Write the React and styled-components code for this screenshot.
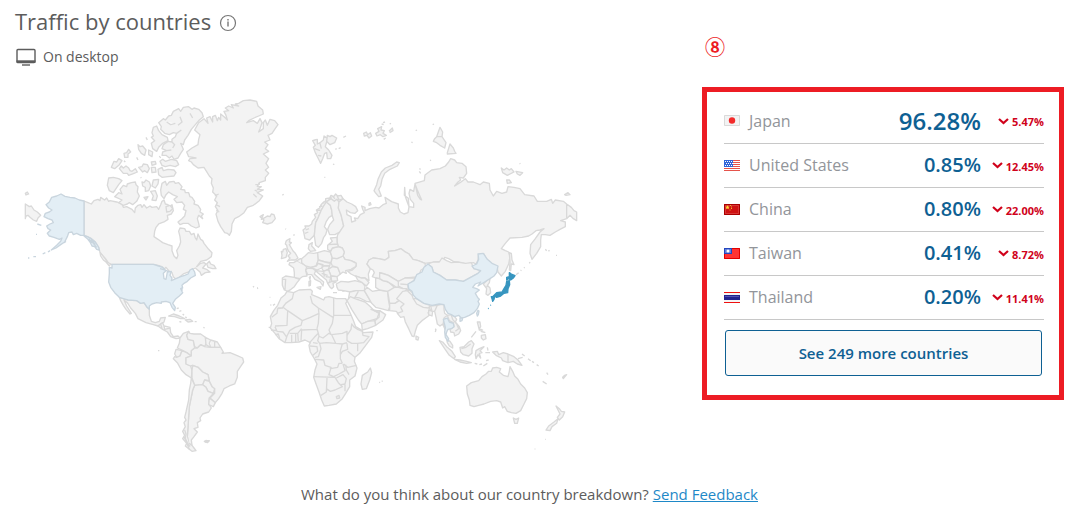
import React from "react";
import styled, { createGlobalStyle } from "styled-components";

const GlobalStyle = createGlobalStyle`
  * {
    box-sizing: border-box;
  }
  body {
    margin: 0;
    background: #fff;
    color: #5c5c5c;
    font-family: "Open Sans", "Noto Sans", sans-serif;
  }
`;

const Page = styled.main`
  padding: 7px 7px 8px 15px;
`;

const Columns = styled.div`
  display: flex;
  align-items: flex-start;
`;

const Left = styled.section`
  flex: 1;
  min-width: 0;
`;

const Title = styled.h1`
  display: flex;
  align-items: center;
  gap: 8px;
  margin: 0;
  font-size: 22px;
  font-weight: 400;
  line-height: 28px;
  svg {
    margin-top: 4px;
  }
`;

const Device = styled.p`
  display: flex;
  align-items: center;
  gap: 6px;
  margin: 11px 0 0;
  font-size: 14px;
  line-height: 22px;
`;

const Map = styled.svg`
  display: block;
  width: 100%;
  max-width: 554px;
  margin: 28px 0 0 9px;
  fill: #f3f3f3;
  stroke: #d9d9d9;
  stroke-linejoin: round;
  stroke-width: 4;
`;

const Borders = styled.path`
  fill: none;
`;

const Visited = styled.path`
  fill: ${(props) => (props.$top ? "#3795bf" : "#e3eef5")};
  stroke: ${(props) => (props.$top ? "#3795bf" : "#c9d5de")};
`;

const Right = styled.aside`
  flex: 0 1 362px;
`;

const Marker = styled.div`
  margin-top: 26px;
  padding-left: 3px;
  color: #ed1c24;
  font-family: "Noto Sans CJK JP", sans-serif;
  font-size: 20px;
  font-weight: 700;
  line-height: 28px;
`;

const Panel = styled.div`
  margin-top: 26px;
  padding: 7px 15px 19px 17px;
  border: 5px solid #ed1c24;
`;

const Table = styled.table`
  width: 100%;
  border-collapse: collapse;
`;

const Row = styled.tr`
  height: 44px;
  border-bottom: 1px solid #c8c8c8;
`;

const Country = styled.th`
  padding: 0;
  color: #92959a;
  font-size: 16px;
  font-weight: 400;
  text-align: left;
  span {
    display: flex;
    align-items: center;
    gap: 9px;
  }
`;

const Share = styled.td`
  padding: 0;
  color: #0e6093;
  font-size: ${(props) => (props.$big ? "24px" : "20px")};
  font-weight: 600;
  line-height: 28px;
  text-align: right;
`;

const Change = styled.td`
  width: 63px;
  padding: 2px 0 0;
  color: #d0021b;
  font-size: 11px;
  font-weight: 700;
  span {
    display: flex;
    align-items: center;
    justify-content: flex-end;
    gap: 3px;
  }
`;

const MoreButton = styled.button`
  display: block;
  width: calc(100% - 3px);
  height: 46px;
  margin: 10px 2px 0 1px;
  border: 1px solid #0e6093;
  border-radius: 3px;
  background: #fafafa;
  color: #0e6093;
  font-family: inherit;
  font-size: 15px;
  font-weight: 600;
  cursor: pointer;
`;

const Feedback = styled.p`
  margin: 29px 0 0;
  padding-right: 20px;
  font-size: 15px;
  line-height: 22px;
  text-align: center;
  a {
    color: #1e88c7;
  }
`;

const InfoIcon = () => (
  <svg width="18" height="18" viewBox="0 0 18 18" fill="none" stroke="#777">
    <circle cx="9" cy="9" r="7.5" strokeWidth="1.2" />
    <path d="M9 7.5v5M9 5v1.5" strokeWidth="1.4" />
  </svg>
);

const DesktopIcon = () => (
  <svg width="22" height="18" viewBox="0 0 22 18" fill="none" stroke="#5c5c5c">
    <rect x="2" y="1.5" width="18" height="13" rx="1" strokeWidth="1.4" />
    <path d="M1.5 13.5h19" strokeWidth="2.4" />
    <path d="M7 17h8" strokeWidth="1.4" />
  </svg>
);

const DownIcon = () => (
  <svg width="11" height="8" viewBox="0 0 11 8" fill="none" stroke="#d0021b">
    <path d="M1 1 5.5 5 10 1" strokeWidth="2.2" />
  </svg>
);

const flags = {
  jp: (
    <>
      <path d="M0 0h16v11H0z" fill="#f3f3f3" />
      <path d="M.5.5h15v10H.5z" fill="none" stroke="#dadada" />
      <circle cx="8" cy="5.5" r="3.2" fill="#f32b2b" />
    </>
  ),
  us: (
    <>
      <path d="M0 0h16v11H0z" fill="#fff" />
      <path d="M0 .5h16M0 2.5h16M0 4.5h16M0 6.5h16M0 8.5h16M0 10.5h16" stroke="#e5534b" />
      <path d="M0 0h9v7H0z" fill="#2f64d8" />
      <path d="M1 1.5h8M2 3.5h7M1 5.5h8" stroke="#fff" strokeDasharray="1 1" />
    </>
  ),
  cn: (
    <>
      <path d="M0 0h16v11H0z" fill="#cf1212" />
      <path d="M.5.5h15v10H.5z" fill="none" stroke="#a80000" />
      <path d="M1.5 1.5h13v8h-13z" fill="none" stroke="#e45858" strokeOpacity=".5" />
      <path d="m3.5 1.2.7 1.3 1.5.2-1.1 1.1.3 1.5-1.4-.8-1.4.8.3-1.5-1.1-1.1 1.5-.2z" fill="#ffd83b" />
      <path d="M6 1h1v1H6zM7 2.5h1v1H7zM7 4h1v1H7zM5.5 5.5h1v1h-1z" fill="#f2b632" />
    </>
  ),
  tw: (
    <>
      <path d="M0 0h16v11H0z" fill="#f33" />
      <path d="M.5.5h15v10H.5z" fill="none" stroke="#e00000" />
      <path d="M0 0h8v6H0z" fill="#2446bd" />
      <path d="M1 1h6v4H1z" fill="#5e7ddd" />
      <circle cx="4" cy="3" r="1.5" fill="#fff" />
    </>
  ),
  th: (
    <>
      <path d="M0 0h16v11H0z" fill="#f5f5f5" />
      <path d="M0 .5h16M0 10.5h16" stroke="#ee1111" />
      <path d="M0 3h16v5H0z" fill="#23238f" />
      <path d="M1 4.5h14" stroke="#5353b5" />
    </>
  ),
};

const Flag = ({ code }) => (
  <svg width="16" height="11" viewBox="0 0 16 11">
    {flags[code]}
  </svg>
);

const countries = [
  { code: "jp", name: "Japan", share: "96.28%", change: "5.47%" },
  { code: "us", name: "United States", share: "0.85%", change: "12.45%" },
  { code: "cn", name: "China", share: "0.80%", change: "22.00%" },
  { code: "tw", name: "Taiwan", share: "0.41%", change: "8.72%" },
  { code: "th", name: "Thailand", share: "0.20%", change: "11.41%" },
];

const north = [
  // far east of Russia, over the date line
  "M46,342 58,350 64,348 72,360 82,366 92,376 84,384 80,394 70,390 60,382 54,376 48,378 46,386Z",
  "M46,310 52,306 56,312 48,315Z",
  // Canada
  "M222,333 234,338 244,342 252,332 264,328 270,332 272,322 284,330 290,324 296,334 300,332 320,336 336,342 340,352 350,350 366,358 374,368 376,354 384,346 392,344 396,352 402,344 410,354 420,348 426,352 440,350 446,358 452,344 456,334 462,330 466,342 474,344 478,352 486,344 490,362 484,372 472,376 474,388 462,396 446,402 438,412 434,424 432,440 444,448 458,458 474,464 486,468 486,482 492,498 500,506 504,496 500,482 508,468 512,456 510,440 506,424 510,414 524,416 528,424 538,424 544,434 552,430 556,444 560,450 564,432 572,448 578,452 582,460 596,478 606,488 604,500 590,510 572,514 560,530 572,520 582,518 588,522 578,534 590,538 600,546 586,548 574,556 570,546 556,534 544,540 536,546 520,552 508,562 498,568 490,560 486,548 478,544 468,532 462,538 456,530 444,526 432,523 304,523 296,520 288,508 278,498 270,486 268,480 266,472 256,456 244,446 232,440 222,436Z",
  "M590,522 598,514 602,522 612,526 618,536 608,536 594,532Z",
  "M270,488 276,494 284,504 292,516 302,522 298,528 288,516 280,510 272,498Z",
  // Baffin
  "M456,280 466,274 470,286 478,276 492,274 496,280 506,278 516,290 512,298 524,300 526,308 536,308 540,320 546,322 554,334 552,342 564,346 572,358 570,366 580,372 574,378 578,386 566,376 562,386 566,400 568,410 558,414 544,408 534,400 520,400 510,404 504,396 516,386 524,378 528,362 520,358 524,346 516,336 500,338 492,328 502,320 488,314 476,306 468,314 462,326 454,316 452,300Z",
  "M468,350 480,346 488,356 480,364 470,366Z",
  "M314,320 326,308 336,312 330,298 340,286 350,290 352,282 364,278 376,276 378,284 384,290 382,306 388,318 380,334 368,344 358,338 352,342 340,346 326,338 336,330Z",
  "M296,264 310,262 326,266 336,272 326,284 318,296 310,308 298,302 292,286Z",
  "M396,276 402,278 408,270 418,276 422,288 416,302 406,304 406,292 398,288Z",
  "M430,270 446,268 444,282 436,294 426,288Z",
  "M422,304 436,302 442,318 438,332 426,330 430,318Z",
  "M402,322 414,320 408,330Z",
  "M304,232 312,214 320,216 326,206 336,212 328,224 314,236Z",
  "M328,236 334,228 340,234 348,228 356,234 360,242 366,244 376,236 382,246 372,250 356,256 352,250 340,250Z",
  "M386,232 396,230 400,222 412,224 418,236 412,248 404,242 398,246Z",
  "M424,232 436,232 438,246 426,248Z M424,216 436,214 438,222 426,226Z",
  "M444,238 456,232 460,242 474,238 492,240 498,248 492,258 474,260 456,262 446,254Z",
  "M450,214 458,208 466,214 484,208 500,212 506,224 496,230 480,226 466,230 456,226Z",
  // Ellesmere and Axel Heiberg
  "M446,98 460,86 466,90 476,78 484,76 490,64 506,56 512,64 520,52 536,50 546,58 552,54 566,58 576,68 580,80 568,90 556,104 544,118 534,136 524,150 520,164 512,160 520,178 512,190 504,204 492,208 486,198 478,204 468,196 456,196 458,186 470,182 456,176 460,164 474,154 486,156 486,148 496,140 500,130 490,128 478,134 464,130 452,118 454,110Z M470,96 482,104 496,100 M510,80 516,96 504,106 M486,156 494,164 488,174 M470,182 484,180 M540,70 548,84 M500,130 514,120",
  "M430,112 440,108 446,122 456,134 472,142 474,152 458,160 446,172 440,184 428,176 424,160 434,152 424,142 430,138 426,128Z",
  "M384,164 390,170 398,168 408,180 404,196 394,190 386,178Z M416,180 428,186 426,200 416,194Z",
  "M342,190 350,188 356,178 362,186 354,192 354,202 344,202Z M408,142 412,150 M342,212 346,216 M380,202 384,210 M392,262 394,264 M448,198 452,204",
];

const arctic = [
  // Greenland
  "M44,120 56,98 72,86 84,100 80,84 90,80 98,96 98,80 106,76 112,92 116,82 122,90 122,72 134,82 142,90 138,76 132,64 146,62 136,54 146,48 160,54 154,44 176,48 166,42 176,40 190,32 210,30 230,34 234,48 248,60 250,72 236,78 222,84 206,92 200,98 220,92 232,100 240,86 246,98 240,116 236,126 250,116 250,98 256,90 262,106 270,88 284,92 294,104 284,118 276,130 264,136 270,150 254,156 264,164 256,176 266,184 250,192 266,206 258,220 266,232 256,240 266,250 256,262 256,272 238,278 232,290 244,290 232,298 250,300 232,308 248,318 238,332 220,346 202,352 192,368 176,380 164,386 156,402 154,424 148,436 142,430 134,428 122,410 114,394 108,372 114,362 106,350 112,338 104,330 110,318 98,306 100,294 94,280 96,266 88,258 72,232 54,234 40,224 34,216 26,212 30,206 48,204 26,200 20,186 36,174 54,164 56,148 60,134Z M104,318 116,312 M108,344 120,350 M108,362 118,366 M226,284 240,282 M220,312 230,322 M224,300 232,304",
  "M240,380 250,374 244,388 256,382 262,378 270,380 274,372 282,374 286,386 276,398 262,402 248,398 252,390Z",
  // Svalbard
  "M398,152 404,150 412,148 412,162 420,158 430,150 432,138 444,146 440,156 436,170 446,180 456,196 452,206 442,206 440,188 434,190 428,206 422,220 414,204 406,188 400,172 406,166Z M404,176 420,182 M414,196 424,198 M420,160 424,176",
  "M442,136 450,140 456,136 470,144 464,158 450,164 440,154Z",
  "M466,178 470,176 M476,176 482,173 M490,142 498,138 M459,222 463,224 M433,262 436,262 M307,316 311,313 M316,416 318,418 M340,436 344,434",
  // British Isles
  "M318,454 322,450 330,446 328,456 334,458 328,464 334,474 340,484 346,490 354,504 346,510 332,510 322,514 330,504 324,498 332,490 326,484 322,476 320,466 316,462Z",
  "M304,484 308,486 310,478 318,476 322,488 318,502 304,506 306,496Z",
];

const eurasia = [
  // Norway, Sweden, Finland
  "M146,156 144,150 152,144 150,138 162,138 170,132 172,124 182,112 178,104 188,98 184,90 194,84 198,74 206,66 212,64 212,56 224,54 228,46 236,50 242,42 248,48 258,46 264,56 254,60 246,58 238,64 228,56 214,66 206,78 198,92 190,112 182,128 180,146 178,166 164,180 150,176Z M186,92 196,90 M192,80 202,78 M204,70 214,60 M220,56 230,52 M232,48 240,56 M246,48 252,58 M150,160 160,156 M152,150 162,146",
  "M178,166 180,146 182,128 190,112 198,92 206,78 214,66 226,76 230,90 232,106 222,112 214,124 208,140 216,150 212,164 206,172 200,190 190,202 182,196 180,182Z",
  "M228,56 238,64 246,58 252,66 250,84 258,104 266,138 254,156 240,164 224,164 218,148 224,134 236,120 232,108 230,90 226,76 214,66Z",
  // Russia
  "M264,56 276,66 290,72 302,80 308,92 300,100 286,98 274,90 276,104 288,110 290,126 302,122 298,114 308,116 316,104 328,98 324,90 320,78 330,82 330,92 344,86 362,82 372,84 384,74 394,70 390,52 410,65 430,72 430,84 436,96 447,102 459,98 462,80 460,55 448,46 449,22 451,50 462,80 476,82 476,70 466,58 462,40 465,28 476,34 480,12 487,30 500,60 496,58 488,46 480,10 508,2 510,-15 530,-30 555,-34 571,-42 581,-54 587,-64 599,-60 605,-52 621,-50 633,-40 635,-20 625,-6 613,-8 617,0 609,6 599,18 615,8 631,-4 639,6 655,6 675,14 685,6 703,10 705,30 715,48 725,34 741,40 755,36 759,20 777,22 795,26 809,44 837,48 847,64 875,64 889,58 893,70 901,60 925,64 935,72 949,82 957,92 965,96 965,122 955,116 945,106 935,116 917,122 931,126 931,140 915,148 901,156 885,166 871,164 859,164 857,180 857,200 845,220 831,238 825,220 827,194 841,176 855,156 867,146 855,150 843,152 831,162 821,168 801,172 765,174 751,190 739,206 751,212 761,216 765,230 761,252 751,274 739,288 729,276 727,265 705,252 693,236 687,222 671,224 669,240 663,252 655,248 635,252 615,248 595,244 581,236 569,232 563,244 545,246 525,248 510,250 490,242 474,238 462,222 448,214 438,206 420,212 400,214 402,232 390,240 370,236 354,234 342,240 336,252 346,266 340,282 342,302 330,294 318,294 300,288 288,282 278,274 292,270 304,258 302,248 288,242 270,238 264,228 268,216 262,204 250,200 246,186 246,174 248,164 254,156 266,138 258,104 250,84 252,66Z M935,72 935,114",
  "M342,70 346,68 348,74 342,76Z",
  // Novaya Zemlya and the arctic islands
  "M357,32 365,14 369,-2 379,-24 391,-36 411,-44 425,-54 433,-52 427,-42 405,-32 389,-20 381,-2 377,18 371,28 379,48 371,50 361,38Z",
  "M326,-140 334,-144 338,-136 346,-142 350,-132 342,-126 336,-134 328,-132Z M362,-140 372,-146 368,-154 380,-160 378,-150 388,-148 384,-140 394,-134 384,-130 376,-136 366,-132Z M380,-168 386,-166 M384,-172 390,-174 M404,-168 408,-170 M402,-146 412,-156 414,-148 404,-142 M386,-122 392,-126",
  "M545,-130 555,-158 563,-144 561,-130 573,-112 569,-96 555,-104 545,-112 535,-116 539,-124Z M545,-130 561,-130 M577,-82 585,-108 595,-96 599,-86 603,-80 577,-78Z",
  "M739,-36 747,-30 755,-36 763,-30 769,-34 777,-24 757,-14 743,-22Z M783,-26 803,-22 795,-14 787,-18Z M755,0 763,0 769,8 757,10Z M929,44 939,38 945,44 933,46Z M482,-148 486,-150 M469,-114 473,-112 M493,-34 497,-32 M493,-26 497,-20 M525,-58 528,-60 M533,-166 537,-168 M794,-50 796,-48",
  // Sakhalin and the Kurils
  "M763,218 769,220 771,240 777,254 769,252 767,272 763,270 765,246Z M783,284 791,278 M797,272 799,270 M807,264 809,262 M823,250 825,246 M871,208 875,212 M881,210 883,214 M903,226 906,226",
  // western and central Europe
  "M82,294 92,288 118,292 134,298 126,308 118,320 108,328 98,334 88,330 82,316Z M82,298 92,298 90,330",
  "M102,254 104,248 116,248 126,242 140,250 156,258 152,270 156,288 142,290 134,296 118,292 118,278 116,264Z",
  "M126,242 136,236 148,242 144,252 M152,270 168,264",
  "M140,236 150,228 160,218 176,220 188,218 190,240 184,258 168,262 152,258 140,248Z",
  "M160,206 162,194 172,188 170,198 176,204 182,212 166,214Z",
  "M188,218 208,212 226,216 232,232 228,248 210,246 190,240Z",
  "M152,270 158,264 174,266 182,272 178,282 194,296 206,306 204,318 196,306 180,298 170,284 158,284Z",
  "M186,322 198,320 196,328Z M162,304 167,302 166,316 162,318Z M163,292 166,290 165,299Z",
  "M168,262 184,258 190,250 204,254 200,264 186,270Z M190,240 210,246 226,250 224,258 206,258 190,250 184,256Z",
  "M200,264 206,258 224,258 220,268 206,274Z",
  "M220,268 232,260 248,262 256,282 246,290 228,288Z",
  "M182,272 206,274 220,268 228,288 224,306 218,310 214,300 200,288 190,280Z M206,274 208,290 M200,280 218,286 M212,290 228,292",
  "M228,288 246,290 248,302 230,304Z",
  "M218,310 230,304 244,306 234,310 236,320 230,326 224,320Z M234,338 246,338 M262,334 270,332",
  "M228,248 232,234 246,236 264,228 270,238 288,242 304,250 302,260 288,268 272,272 274,280 264,276 256,282 248,262 232,258Z",
  "M226,216 232,204 250,200 262,204 268,216 264,228 246,236 232,234Z",
  "M226,174 246,172 246,186 250,200 232,204 226,214 218,208 218,196 232,184Z M220,194 248,192",
  // Turkey, Caucasus, Middle East
  "M244,312 258,304 280,306 300,302 322,308 330,318 328,332 304,332 286,336 266,332 250,330 246,322Z",
  "M302,288 318,294 330,294 342,308 334,318 322,308 308,300Z",
  "M284,336 304,332 328,332 340,352 348,366 334,364 314,354 300,352 288,362 280,358Z M310,334 300,352",
  "M328,332 336,322 352,334 374,330 398,334 400,358 404,380 400,392 378,386 362,382 350,370 340,352Z",
  // Central Asia
  "M346,266 336,252 342,240 354,234 370,236 390,240 402,232 400,214 420,212 438,206 448,214 462,222 474,238 490,242 510,250 512,262 498,270 490,290 470,292 450,294 440,300 430,304 416,296 400,286 384,280 374,278 374,296 362,294 352,290 358,278 354,270Z",
  "M362,294 374,296 384,302 400,306 418,322 412,334 398,334 374,330 362,322Z",
  "M374,278 400,286 416,296 430,304 440,318 424,322 412,314 396,304 384,302 374,296Z",
  "M430,304 450,294 482,294 474,304 458,314 460,330 444,326 430,318Z M436,312 458,314",
  "M398,334 418,322 430,322 444,326 456,326 446,340 438,358 420,370 404,370Z",
  "M404,370 420,370 438,358 446,340 460,328 474,340 466,356 450,372 440,384 446,396 432,404 424,394 404,392Z",
];

const africa = [
  "M96,34 116,38 132,30 166,28 172,34 170,44 190,52 206,60 210,52 222,50 244,56 272,56 276,64 272,70 286,100 296,124 302,140 322,152 324,158 354,156 350,172 332,196 314,220 300,232 298,244 306,264 300,288 284,300 284,320 272,340 262,356 244,372 222,376 208,378 200,360 192,336 184,314 176,292 180,270 186,252 178,236 166,216 162,196 166,188 150,180 132,186 108,188 90,188 72,176 60,160 46,144 50,130 46,110 56,92 68,76 78,54 90,44Z",
  "M346,264 350,278 344,300 334,326 322,328 318,312 322,286 338,276Z",
  "M276,62 286,50 300,56 330,66 344,78 358,92 372,100 366,116 338,124 320,132 310,120 300,104 290,88Z",
  "M320,132 338,124 360,122 362,136 338,146 322,150Z",
  "M374,92 392,104 384,120 362,136 360,122 372,112Z",
  "M348,88 358,92 372,98 374,92 366,92Z",
  "M44,52 46,52 M46,75 49,75 M54,76 60,72 M6,24 9,24 M364,152 368,152 M373,306 375,308 M380,304 383,303",
];

const africaBorders =
  "M116,38 112,56 92,70 82,84 M68,84 84,84 M82,80 98,92 142,122 M98,92 96,136 60,138 M142,122 166,112 192,100 M166,48 172,70 190,84 192,102 M236,54 236,106 288,106 M190,84 234,112 M236,106 232,130 222,150 228,164 M192,102 190,130 186,146 M142,122 138,136 120,142 104,152 96,168 M140,150 186,148 190,160 178,172 164,188 M140,150 138,182 M128,158 130,184 M122,162 122,186 M110,164 110,188 M104,160 128,160 140,146 M96,168 90,188 M60,140 66,154 84,156 94,170 M48,150 66,152 M60,164 70,162 74,176 M82,84 68,86 66,100 50,112 M190,168 204,174 222,160 230,164 262,160 276,154 276,166 M186,146 192,168 188,182 194,190 214,188 242,190 262,192 276,188 M230,164 242,190 M276,166 288,148 290,132 296,140 308,148 322,154 M322,156 324,166 342,170 326,188 308,190 290,190 276,182 276,166 M308,190 308,214 M194,190 198,206 190,230 180,232 M164,198 186,200 188,214 174,226 M180,238 206,240 210,256 228,262 226,266 248,262 252,250 262,250 M262,192 256,212 256,236 262,250 M276,190 278,208 262,214 256,224 M278,214 300,232 M266,252 278,262 304,256 M228,264 222,284 236,290 252,282 270,272 264,252 M272,254 274,270 282,284 M176,290 240,292 M216,294 214,336 198,346 M240,292 250,308 262,320 240,330 226,334 214,326 M244,294 264,284 274,296 270,312 258,314 M270,314 270,334 M244,350 252,346 254,354 246,356Z M174,188 188,190";

const pacific = [
  // Mongolia
  "M84,102 100,96 118,96 126,84 140,92 154,98 174,96 196,100 214,98 222,116 242,122 234,130 212,142 190,154 166,150 140,150 120,136 100,126 96,112Z",
  // India and neighbours
  "M-10,206 8,184 22,182 36,196 40,206 50,214 72,224 88,232 92,242 84,248 88,256 80,262 66,272 52,286 46,304 42,320 36,318 26,296 16,276 12,260 2,262 -8,250 8,244 2,232 12,222Z",
  "M40,206 50,206 72,220 90,226 86,234 70,232 50,222Z M86,240 98,244 96,258 86,254Z M92,228 112,226 108,244 96,244Z",
  "M48,318 56,322 54,330 48,328Z",
  "M104,244 112,226 122,224 132,224 132,238 134,250 142,256 132,264 130,278 136,300 128,282 120,288 112,282 108,262Z",
  "M142,256 154,254 164,260 170,268 166,276 178,290 182,302 176,312 164,318 162,308 152,306 150,298 162,290 160,278 148,272Z M154,256 158,268 170,282 176,296 166,304",
  "M140,328 150,334 158,346 158,354 148,348 142,338Z",
  // Korea
  "M250,162 262,150 270,146 268,158 262,166 270,174 272,188 264,196 258,192 260,176Z M256,172 266,168",
  // Indonesia, Philippines, New Guinea
  "M118,332 128,336 140,350 156,364 166,380 162,386 148,376 134,356Z",
  "M164,388 180,390 200,394 214,398 200,400 180,396Z M224,400 232,402 M238,404 246,402 M250,408 262,400 M258,392 266,390",
  "M180,352 192,350 206,336 214,332 222,342 216,356 216,370 206,378 190,374 182,366Z M184,356 198,352 212,342",
  "M228,362 238,356 252,350 240,362 246,368 238,370 242,384 234,374 228,386 226,374Z M262,352 264,362 M256,368 270,368",
  "M232,276 240,276 242,290 238,296 248,300 238,300Z M214,322 228,304 M242,304 250,306 256,308 M244,316 256,314 258,326 250,330 244,324Z",
  "M278,366 292,364 296,374 310,368 324,372 342,380 354,390 366,406 352,402 340,394 324,398 308,392 304,384 288,376Z M324,372 324,398 M354,386 368,382 M366,372 374,378 M384,386 392,392 M396,394 402,398 M410,404 416,408",
  // Australia and New Zealand
  "M200,468 214,458 236,452 246,440 258,432 266,424 274,424 278,414 290,412 302,416 298,426 310,436 324,440 328,424 330,410 338,424 344,438 354,448 362,462 374,474 382,488 380,506 372,522 362,542 348,550 334,548 322,544 314,530 308,534 302,516 290,512 272,514 252,522 236,526 222,530 210,526 208,510 202,492Z",
  "M340,564 348,568 356,564 352,580 344,580Z",
  "M468,528 478,536 484,544 494,546 488,560 478,570 472,562 480,552Z M474,566 470,580 456,590 450,602 438,600 446,588 462,576Z",
  "M428,454 440,462 M440,428 444,434 M488,442 494,436 500,434 490,446Z M435,628 437,628 M404,657 406,657 M106,306 108,298 M106,300 108,296",
];

const south = [
  // Mexico and Central America
  "M88,142 108,148 114,150 140,152 152,160 162,158 170,170 178,178 178,196 184,214 196,218 208,214 212,204 226,202 222,216 212,222 204,228 190,224 168,218 144,206 136,190 122,174 112,158 102,150 110,168 124,190 120,192 108,178 100,166 92,152Z",
  "M204,228 212,222 218,218 222,228 240,232 242,248 250,260 264,258 270,264 258,266 242,260 232,246 218,238Z M222,228 224,238 240,234 M212,222 216,236",
  "M236,198 250,192 268,198 284,206 272,206 254,200Z M286,210 300,208 308,214 294,216Z M268,215 274,216 M314,215 320,215 M260,176 266,174 M268,184 274,182 M278,192 282,196 M286,200 290,204 M340,232 344,234 M204,302 208,302 M489,109 492,112 M502,114 504,116 M536,232 540,232",
  // South America
  "M270,264 280,250 296,244 290,256 294,268 310,272 314,294 304,302 304,318 290,308 276,300 262,294 268,280Z",
  "M296,244 300,250 312,252 332,252 346,262 350,276 344,290 332,284 322,294 314,290 310,272 294,268 290,256Z",
  "M346,262 362,270 382,276 392,292 376,292 360,292 348,284Z M362,270 358,280 362,292 M374,274 374,292",
  "M258,298 276,302 270,318 260,322 254,312Z",
  "M254,320 260,322 270,318 276,302 290,308 304,318 288,324 288,342 302,348 306,362 304,384 288,374 274,360 262,338 250,326Z",
  "M304,302 314,294 322,294 332,284 344,290 360,292 376,292 392,292 400,306 396,310 420,308 440,316 458,324 461,336 450,352 442,364 442,382 434,402 418,408 402,416 396,430 386,446 376,458 360,444 374,430 374,416 366,410 358,394 354,374 338,366 324,352 308,346 302,348 288,342 288,324 304,318Z",
  "M308,346 324,352 338,366 354,374 358,392 344,390 338,404 314,406 306,384 306,362Z",
  "M344,390 358,394 366,410 374,416 370,430 354,424 348,412 338,404Z",
  "M314,406 338,404 348,412 354,424 370,430 358,444 356,462 364,474 356,486 338,492 330,504 332,512 322,518 324,532 312,536 322,546 312,560 304,570 306,586 296,580 292,560 294,530 296,500 298,470 304,440 308,420Z",
  "M304,384 314,406 308,420 304,440 298,470 296,500 294,530 292,560 296,580 306,586 312,594 318,602 306,604 296,596 286,588 290,580 278,566 284,556 278,544 286,530 282,518 288,510 284,502 288,486 296,450 298,420 302,400Z",
  "M284,540 288,552 286,566 292,578 300,590 M282,560 288,574 298,598",
  "M358,444 376,458 370,470 356,464Z M343,574 349,571 348,577Z M350,572 358,572 352,578Z",
];

const alaska =
  "M222,333 208,330 195,324 180,322 165,319 153,312 140,318 125,322 118,336 108,344 116,354 126,360 118,366 106,370 102,380 114,386 126,390 130,398 120,402 110,408 114,416 122,420 112,430 118,438 132,442 142,446 148,448 156,444 152,454 140,466 124,480 138,474 152,464 164,456 172,440 176,428 186,426 190,434 200,430 212,436 222,436 232,440 244,446 256,456 266,472 268,480 260,478 254,470 246,468 240,456 232,446 222,438Z M236,446 250,460 260,472 M244,448 256,464 M242,456 252,458 M98,492 106,488 M114,486 120,482 M70,500 78,500 M54,504 58,504 M82,402 94,406 M78,433 81,433 M162,458 168,454";

const usa =
  "M66,43 190,43 206,48 218,52 228,62 220,70 222,86 228,88 232,66 244,64 240,76 246,84 244,92 258,86 272,80 284,76 294,72 300,60 308,56 314,66 316,76 302,84 292,94 282,100 276,106 278,114 272,116 278,128 268,138 256,148 248,160 256,172 254,182 246,172 240,158 228,154 214,156 214,160 200,158 186,162 178,168 178,178 170,170 162,158 152,160 140,152 114,150 108,148 88,142 74,128 62,112 56,96 58,70 58,52 66,54Z M210,56 226,60 240,66 M276,112 276,126";

const china =
  "M24,162 42,152 50,134 66,126 72,112 84,102 96,112 100,126 120,136 140,150 166,150 190,154 212,142 234,130 242,122 222,116 216,108 230,102 236,88 234,72 250,70 262,88 276,100 294,108 290,128 282,138 270,146 254,156 244,162 234,168 242,156 226,162 218,172 230,176 238,180 226,190 234,204 238,208 234,214 238,222 232,236 222,248 208,256 194,262 184,264 176,256 164,260 154,254 144,250 136,238 132,224 118,222 96,226 72,220 50,206 40,196 36,184 26,176Z M180,264 188,264 186,272 180,274Z";

const thailand =
  "M130,268 142,264 148,276 160,280 162,290 154,296 144,298 140,306 138,314 146,326 144,334 136,322 134,306 136,292Z";

const japan =
  "M328,128 334,132 345,137 340,144 332,150 326,146 320,150 320,142 328,140Z M320,154 328,152 329,164 324,176 323,188 312,190 302,198 290,202 284,198 278,200 290,188 306,186 312,176 318,166Z M274,200 284,200 282,208 278,214 276,206Z M286,200 296,198 M271,226 273,225 M264,236 266,235";

const shapes = (list) => list.map((d) => <path key={d} d={d} />);

// every group keeps its own origin, three units to one unit of the view box
const WorldMap = () => (
  <Map viewBox="24 96 554 358" role="img" aria-label="Traffic by country">
    <g transform="translate(10 90) scale(.33333)">
      {shapes(north)}
      <Visited d={alaska} />
    </g>
    <g transform="translate(180 90) scale(.33333)">{shapes(arctic)}</g>
    <g transform="translate(90 250) scale(.33333)">
      {shapes(south)}
      <Visited d={usa} />
    </g>
    <g transform="translate(255 180) scale(.33333)">{shapes(eurasia)}</g>
    <g transform="translate(255 280) scale(.33333)">
      {shapes(africa)}
      <Borders d={africaBorders} />
    </g>
    <g transform="translate(400 230) scale(.33333)">
      {shapes(pacific)}
      <Visited d={china} />
      <Visited d={thailand} />
      <Visited d="M230,250 234,241 237,243 235,254 232,258Z" />
      <Visited $top d={japan} />
    </g>
  </Map>
);

const CountryTable = () => (
  <Table>
    <tbody>
      {countries.map((c, i) => (
        <Row key={c.code}>
          <Country scope="row">
            <span>
              <Flag code={c.code} />
              {c.name}
            </span>
          </Country>
          <Share $big={i === 0}>{c.share}</Share>
          <Change>
            <span>
              <DownIcon />
              {c.change}
            </span>
          </Change>
        </Row>
      ))}
    </tbody>
  </Table>
);

const App = () => {
  return (
    <Page>
      <GlobalStyle />
      <Columns>
        <Left>
          <Title>
            Traffic by countries <InfoIcon />
          </Title>
          <Device>
            <DesktopIcon /> On desktop
          </Device>
          <WorldMap />
        </Left>
        <Right>
          <Marker>⑧</Marker>
          <Panel>
            <CountryTable />
            <MoreButton type="button">See 249 more countries</MoreButton>
          </Panel>
        </Right>
      </Columns>
      <Feedback>
        What do you think about our country breakdown? <a href="#feedback">Send Feedback</a>
      </Feedback>
    </Page>
  );
};

export default App;
